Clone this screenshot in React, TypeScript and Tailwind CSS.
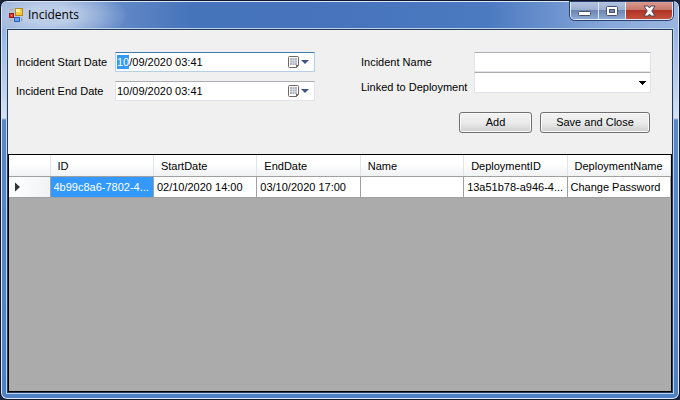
import { useEffect, useRef } from "react";
import type { ReactNode } from "react";

const columns = ["ID", "StartDate", "EndDate", "Name", "DeploymentID", "DeploymentName"];
const incident = [
  "4b99c8a6-7802-4...",
  "02/10/2020 14:00",
  "03/10/2020 17:00",
  "",
  "13a51b78-a946-4...",
  "Change Password",
];

function AppIcon() {
  return (
    <svg width="14" height="14" viewBox="0 0 14 14" shapeRendering="crispEdges" aria-hidden="true">
      <path d="M0 0h5v4H0zM0 11h4v3H0zM12 9h2v5h-2z" fill="#b9bfcc" />
      <path d="M1 1h1v1H1zM3 1h1v1H3zM1 12h1v1H1zM12 10h1v3h-1z" fill="#8d95a5" />
      <rect x="6" y="0" width="8" height="8" fill="#b58a1c" />
      <rect x="7" y="1" width="6" height="6" fill="#fbc92f" />
      <rect x="7" y="1" width="4" height="3" fill="#fff0a0" />
      <rect x="0" y="5" width="5" height="5" fill="#a01414" />
      <rect x="1" y="6" width="3" height="3" fill="#e03c2c" />
      <rect x="2" y="7" width="1" height="1" fill="#ffb0a0" />
      <rect x="5" y="9" width="6" height="5" fill="#2c62b8" />
      <rect x="6" y="10" width="4" height="3" fill="#69a3ee" />
    </svg>
  );
}

function CalendarIcon() {
  return (
    <svg width="21" height="13" viewBox="0 0 21 13" aria-hidden="true">
      <path d="M1.500.5h8a1 1 0 0 1 1 1v8l-2 2h-7a1 1 0 0 1-1-1v-9a1 1 0 0 1 1-1z" fill="#fff" stroke="#75655f" />
      <path d="M2 2h7v7H2z" fill="#b0b6c2" />
      <path d="M2 4.500h7M2 6.500h7M4.500 2v7M6.500 2v7" stroke="#e9ecf2" strokeWidth=".5" />
      <path d="M8 12V9h3z" fill="#75655f" />
      <path d="M13 4h8l-4 4z" fill="#3d5584" />
    </svg>
  );
}

function DateField({ id, label, active }: { id: string; label: string; active?: boolean }) {
  const ref = useRef<HTMLInputElement>(null);
  useEffect(() => {
    if (active && ref.current) {
      ref.current.focus();
      ref.current.setSelectionRange(0, 2);
    }
  }, [active]);
  return (
    <div className="flex items-center">
      <label htmlFor={id} className="w-[99px] shrink-0">{label}</label>
      <div
        className={
          "flex h-5 w-[200px] items-center rounded-[1px] border bg-white pr-[5px] pl-px " +
          (active ? "border-[#b5cfe7] border-t-[#3d7bad]" : "border-[#e2e3ea] border-t-[#abadb3]")
        }
      >
        <input
          ref={ref}
          id={id}
          defaultValue="10/09/2020 03:41"
          className="h-[14px] min-w-0 flex-1 leading-[14px] outline-none selection:bg-[#3399ff] selection:text-white"
        />
        <button type="button" aria-label={"Open calendar for " + label}><CalendarIcon /></button>
      </div>
    </div>
  );
}

function FormButton({ children, wide }: { children: ReactNode; wide?: boolean }) {
  return (
    <button
      type="button"
      className={
        "h-[21px] rounded-[3px] border border-[#707070] bg-linear-to-b from-[#f2f2f2] from-0% via-[#ebebeb] via-50% to-[#cfcfcf] shadow-[inset_0_0_0_1px_#fafafa] " +
        (wide ? "w-[110px]" : "w-[73px]")
      }
    >
      {children}
    </button>
  );
}

function CaptionButtons() {
  return (
    <div className="flex h-[18px] overflow-hidden rounded-b-[5px] border border-t-0 border-[#e1ebf7] shadow-[0_0_0_1px_#2c4170]">
      <button type="button" aria-label="Minimize" className="flex w-7 items-center justify-center border-r border-[#e1ebf7] bg-[linear-gradient(#b3c4df_0%,#9db0d0_45%,#6d86b3_50%,#8ea9d4_100%)]">
        <svg width="13" height="14" viewBox="0 0 13 14"><rect x=".5" y="7.500" width="12" height="4" rx="1" fill="#fff" stroke="#4b5265" /></svg>
      </button>
      <button type="button" aria-label="Maximize" className="flex w-[27px] items-center justify-center border-r border-[#e1ebf7] bg-[linear-gradient(#b3c4df_0%,#9db0d0_45%,#6d86b3_50%,#8ea9d4_100%)]">
        <svg width="12" height="10" viewBox="0 0 12 10">
          <rect x=".5" y=".5" width="11" height="9" rx="1" fill="#fff" stroke="#4b5265" />
          <rect x="3.500" y="3.500" width="5" height="3" fill="#7189b5" stroke="#4b5265" />
        </svg>
      </button>
      <button type="button" aria-label="Close" className="flex w-[46px] items-center justify-center bg-[linear-gradient(#d99b90_0%,#c7776b_45%,#ae3325_50%,#c4503b_100%)]">
        <svg width="13" height="12" viewBox="0 0 13 12">
          <path d="M1 1h4l1.500 2L8 1h4L8.800 6 12 11H8L6.500 9 5 11H1l3.200-5z" fill="#fff" stroke="#4b4654" strokeLinejoin="round" />
        </svg>
      </button>
    </div>
  );
}

export default function App() {
  return (
    <div className="min-h-screen bg-[#1b2438] font-['Liberation_Sans',Arial,sans-serif] text-[11px] text-black">
      <div className="flex min-h-screen flex-col rounded-[7px] border border-[#10172b] bg-[linear-gradient(#86a6da_0px,#a9c3e8_60px,#d4e2f4_117px,#5b87c8_119px,#5080c4_100%)] px-[5px] pb-[5px] shadow-[inset_0_0_0_1px_#dbe7f5]">
        <header className="-mx-1 mt-px flex h-[26px] items-start justify-between rounded-t-[5px] bg-[radial-gradient(ellipse_80px_30px_at_46px_13px,#bccde8_30%,transparent),linear-gradient(90deg,#8ea9d8_0%,#4674bb_28%,#4673bb_45%,#4c7ac1_72%,#88a8da_90%,#9ab5e0_100%)] pr-[5px] pl-[7px]">
          <div className="flex h-[26px] items-center gap-[5px]">
            <AppIcon />
            <h1 className="font-['Open_Sans','Noto_Sans',sans-serif] text-[12px]">Incidents</h1>
          </div>
          <CaptionButtons />
        </header>
        <main className="flex flex-1 flex-col border border-[#b9d5ee]">
          <div className="flex flex-1 flex-col border border-[#26395a] bg-[#f0f0f0]">
            <form className="pt-[22px] pr-[21px] pb-[21px] pl-2" onSubmit={(e) => e.preventDefault()}>
              <div className="flex justify-between">
                <div className="flex flex-col gap-[9px]">
                  <DateField id="start" label="Incident Start Date" active />
                  <DateField id="end" label="Incident End Date" />
                </div>
                <div>
                  <div className="flex items-center">
                    <label htmlFor="name" className="w-[113px]">Incident Name</label>
                    <input id="name" className="h-5 w-[177px] rounded-[1px] border border-[#e2e3ea] border-t-[#abadb3] bg-white px-1 outline-none" />
                  </div>
                  <div className="flex items-start">
                    <label htmlFor="deployment" className="w-[113px] pt-2 leading-[14px]">Linked to Deployment</label>
                    <div className="grid">
                      <select id="deployment" className="col-start-1 row-start-1 h-[21px] w-[177px] appearance-none rounded-[1px] border border-[#e2e3ea] border-t-[#abadb3] bg-white px-1 outline-none">
                        <option></option>
                      </select>
                      <svg width="7" height="4" viewBox="0 0 7 4" className="pointer-events-none col-start-1 row-start-1 mr-[5px] self-center justify-self-end" shapeRendering="crispEdges">
                        <path d="M0 0h7v1H6v1H5v1H4v1H3V3H2V2H1V1H0z" />
                      </svg>
                    </div>
                  </div>
                </div>
              </div>
              <div className="mt-[11px] flex justify-end gap-2 pr-px">
                <FormButton>Add</FormButton>
                <FormButton wide>Save and Close</FormButton>
              </div>
            </form>
            <div className="flex-1 border border-black bg-[#ababab]">
              <table className="w-full table-fixed border-collapse bg-white text-left">
                <thead>
                  <tr className="h-[21px] bg-linear-to-b from-white from-40% to-[#f1f2f4]">
                    <th className="w-[41px] border-r border-b border-r-[#e0e3e8] border-b-[#a0a0a0]" aria-label="Row" />
                    {columns.map((name) => (
                      <th key={name} className="border-r border-b border-r-[#e0e3e8] border-b-[#a0a0a0] pt-0.5 pl-[7px] font-normal whitespace-nowrap">{name}</th>
                    ))}
                  </tr>
                </thead>
                <tbody>
                  <tr className="h-[21px]">
                    <th className="border-r border-b border-[#a0a0a0] bg-linear-to-r from-white to-[#f1f2f4] pl-1.5" aria-label="Current row">
                      <svg width="6" height="10" viewBox="0 0 6 10"><path d="M0 0.500l5 4.500L0 9.500z" fill="#333" /></svg>
                    </th>
                    {incident.map((value, i) => (
                      <td
                        key={columns[i]}
                        className={
                          "border-r border-b border-[#a0a0a0] pt-0.5 pl-[3px] whitespace-nowrap " +
                          (i === 0 ? "bg-[#3399ff] text-white" : "")
                        }
                      >
                        {value}
                      </td>
                    ))}
                  </tr>
                </tbody>
              </table>
            </div>
          </div>
        </main>
      </div>
    </div>
  );
}
